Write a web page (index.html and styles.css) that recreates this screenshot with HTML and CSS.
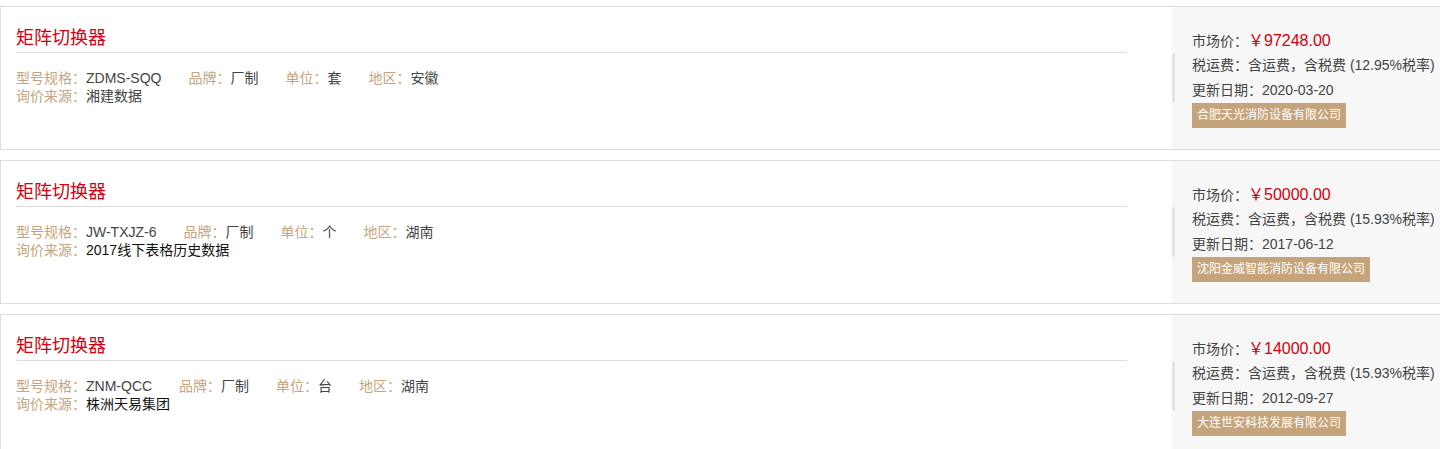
FILE: index.html
```html
<!DOCTYPE html>
<html lang="zh-CN">
<head>
<meta charset="utf-8">
<title>矩阵切换器</title>
<link rel="stylesheet" href="styles.css">
</head>
<body>
<div class="list">
  <div class="card">
    <div class="main">
      <h3 class="title">矩阵切换器</h3>
      <div class="info">
        <div class="row">
          <span class="item"><span class="lbl">型号规格：</span>ZDMS-SQQ</span>
          <span class="item"><span class="lbl">品牌：</span>厂制</span>
          <span class="item"><span class="lbl">单位：</span>套</span>
          <span class="item"><span class="lbl">地区：</span>安徽</span>
        </div>
        <div class="src"><span class="lbl">询价来源：</span>湘建数据</div>
      </div>
    </div>
    <div class="side">
      <div class="line price-line">市场价：<span class="price">￥97248.00</span></div>
      <div class="line">税运费：含运费，含税费 (12.95%税率)</div>
      <div class="line">更新日期：2020-03-20</div>
      <span class="badge">合肥天光消防设备有限公司</span>
    </div>
  </div>

  <div class="card">
    <div class="main">
      <h3 class="title">矩阵切换器</h3>
      <div class="info">
        <div class="row">
          <span class="item"><span class="lbl">型号规格：</span>JW-TXJZ-6</span>
          <span class="item"><span class="lbl">品牌：</span>厂制</span>
          <span class="item"><span class="lbl">单位：</span>个</span>
          <span class="item"><span class="lbl">地区：</span>湖南</span>
        </div>
        <div class="src"><span class="lbl">询价来源：</span><span class="dark">2017线下表格历史数据</span></div>
      </div>
    </div>
    <div class="side">
      <div class="line price-line">市场价：<span class="price">￥50000.00</span></div>
      <div class="line">税运费：含运费，含税费 (15.93%税率)</div>
      <div class="line">更新日期：2017-06-12</div>
      <span class="badge">沈阳金威智能消防设备有限公司</span>
    </div>
  </div>

  <div class="card">
    <div class="main">
      <h3 class="title">矩阵切换器</h3>
      <div class="info">
        <div class="row">
          <span class="item"><span class="lbl">型号规格：</span>ZNM-QCC</span>
          <span class="item"><span class="lbl">品牌：</span>厂制</span>
          <span class="item"><span class="lbl">单位：</span>台</span>
          <span class="item"><span class="lbl">地区：</span>湖南</span>
        </div>
        <div class="src"><span class="lbl">询价来源：</span><span class="dark">株洲天易集团</span></div>
      </div>
    </div>
    <div class="side">
      <div class="line price-line">市场价：<span class="price">￥14000.00</span></div>
      <div class="line">税运费：含运费，含税费 (15.93%税率)</div>
      <div class="line">更新日期：2012-09-27</div>
      <span class="badge">大连世安科技发展有限公司</span>
    </div>
  </div>
</div>
</body>
</html>
```

FILE: styles.css
```css
* { box-sizing: border-box; }
html, body { margin: 0; padding: 0; background: #fff; }
body {
  font-family: "Liberation Sans", "Noto Sans CJK SC", sans-serif;
  font-size: 14px;
  color: #333;
  overflow: hidden;
}
.list { padding-top: 6px; }
.card {
  display: flex;
  border-top: 1px solid #ddd;
  border-bottom: 1px solid #ddd;
  border-left: 1px solid #ddd;
  margin-bottom: 10px;
  background: #fff;
}
.main {
  flex: 1 1 auto;
  padding: 0 45px 0 15px;
}
.title {
  margin: 17px 0 0;
  font-size: 18px;
  font-weight: normal;
  line-height: 28px;
  color: #d4000d;
  border-bottom: 1px solid #ddd;
}
.info {
  margin-top: 16px;
  line-height: 18px;
}
.row { display: flex; gap: 27px; }
.item { color: #444; }
.lbl { color: #c6a47e; }
.src { color: #444; }
.dark { color: #111; }
.side {
  position: relative;
  flex: 0 0 268px;
  background: #f7f7f7;
  padding: 21px 0 21px 20px;
  white-space: nowrap;
  color: #444;
}
.side::before {
  content: "";
  position: absolute;
  left: 0;
  top: 46px;
  width: 3px;
  height: 50px;
  border-radius: 2px;
  background: #e4e4e4;
}
.line { line-height: 25px; height: 25px; }
.price { color: #d4000d; font-size: 16px; }
.badge {
  display: inline-block;
  height: 25px;
  line-height: 25px;
  padding: 0 5px;
  font-size: 12px;
  color: #fff;
  background: #c6a47b;
}
```
